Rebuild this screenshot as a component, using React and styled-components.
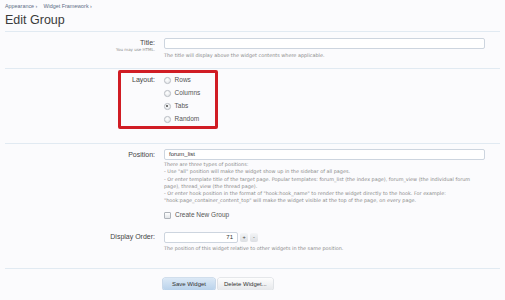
import React from "react";
import styled, { createGlobalStyle } from "styled-components";

const GlobalStyle = createGlobalStyle`
  html, body {
    margin: 0;
    padding: 0;
    background: #fbfbfd;
  }
  body {
    font-family: "Liberation Sans", Arial, sans-serif;
    color: #333;
  }
`;

const Page = styled.div`
  width: 495px;
  padding: 3px 5px 0;
`;

const Crumbs = styled.div`
  display: flex;
  gap: 6px;
  height: 7px;
  font-size: 5.4px;
  line-height: 7px;
  color: #5d6d86;
`;

const Heading = styled.h1`
  margin: 0;
  height: 21px;
  font-weight: normal;
  font-size: 12.5px;
  line-height: 21px;
  color: #3a3a3a;
`;

const Rule = styled.div`
  height: 1px;
  background: #e1eaf2;
`;

const Row = styled.div`
  position: relative;
  display: grid;
  grid-template-columns: 150px 321px;
  column-gap: 9px;
  padding: ${(p) => p.$pad || "6px 0 0"};
  height: ${(p) => p.$h}px;
  box-sizing: border-box;
`;

const Label = styled.div`
  text-align: right;
  font-size: 7px;
  line-height: ${(p) => p.$lh || 11}px;
  color: #444;
`;

const SubLabel = styled.div`
  text-align: right;
  font-family: "DejaVu Sans", Verdana, sans-serif;
  font-size: 4px;
  line-height: 5px;
  color: #8a8a8a;
`;

const Control = styled.div`
  display: flex;
  flex-direction: column;
`;

const Input = styled.div`
  height: 11px;
  width: ${(p) => p.$w || 321}px;
  box-sizing: border-box;
  background: #fff;
  border: 1px solid #cdd5df;
  border-radius: 2px;
  font-size: 6px;
  line-height: 9px;
  padding: 0 4px;
  color: #333;
  text-align: ${(p) => p.$align || "left"};
`;

const Hint = styled.div`
  margin-top: ${(p) => p.$mt ?? 3}px;
  font-family: "DejaVu Sans", Verdana, sans-serif;
  font-size: 4.9px;
  line-height: 7.3px;
  color: #8a8a8a;
  white-space: nowrap;
`;

const Options = styled.div`
  display: flex;
  flex-direction: column;
  gap: 6.5px;
`;

const Option = styled.label`
  display: flex;
  align-items: center;
  gap: 4px;
  height: 6.5px;
  font-size: 6.5px;
  line-height: 6.5px;
  color: #555;
`;

const Radio = styled.span`
  flex: none;
  width: 4.6px;
  height: 4.6px;
  border-radius: 50%;
  border: 0.6px solid #b8bcc2;
  background: radial-gradient(circle at 40% 35%, #fff, #dfe2e6);
  display: flex;
  align-items: center;
  justify-content: center;
  &::after {
    content: "";
    width: 2px;
    height: 2px;
    border-radius: 50%;
    background: ${(p) => (p.$on ? "#444" : "transparent")};
  }
`;

const Check = styled.span`
  flex: none;
  width: 5px;
  height: 5px;
  border-radius: 1px;
  border: 0.6px solid #aeb3ba;
  background: linear-gradient(#fff, #e2e5e9);
`;

const Highlight = styled.div`
  position: absolute;
  left: 113px;
  top: 1px;
  width: 100px;
  height: 59px;
  box-sizing: border-box;
  border: 3px solid #d01c24;
  border-radius: 2px;
  pointer-events: none;
`;

const Spinner = styled.div`
  display: flex;
  align-items: center;
  gap: 2px;
`;

const Step = styled.span`
  width: 8px;
  height: 9px;
  border-radius: 2px;
  background: linear-gradient(#f4f5f7, #dcdfe3);
  font-size: 5.5px;
  line-height: 9px;
  text-align: center;
  color: #444;
`;

const Buttons = styled.div`
  display: flex;
  gap: 3px;
  padding: 9px 0 0 158px;
`;

const Button = styled.span`
  height: 12px;
  padding: 0 ${(p) => (p.$primary ? 9 : 6)}px;
  border-radius: 2px;
  font-size: 6px;
  line-height: 12px;
  color: #333;
  background: ${(p) =>
    p.$primary
      ? "linear-gradient(#dce9f6, #b9d2eb)"
      : "linear-gradient(#fdfdfd, #e6e8eb)"};
  box-shadow: 0 0 0 0.6px ${(p) => (p.$primary ? "#a8c2dc" : "#cfd3d8")};
`;

const layouts = ["Rows", "Columns", "Tabs", "Random"];

const positionHelp = [
  "There are three types of positions:",
  '- Use "all" position will make the widget show up in the sidebar of all pages.',
  "- Or enter template title of the target page. Popular templates: forum_list (the index page), forum_view (the individual forum",
  "page), thread_view (the thread page).",
  '- Or enter hook position in the format of "hook:hook_name" to render the widget directly to the hook. For example:',
  '"hook:page_container_content_top" will make the widget visible at the top of the page, on every page.',
];

export default function App() {
  return (
    <>
      <GlobalStyle />
      <Page>
        <Crumbs>
          <span>Appearance ›</span>
          <span>Widget Framework ›</span>
        </Crumbs>
        <Heading>Edit Group</Heading>
        <Rule />

        <Row $h={36}>
          <div>
            <Label $lh={9}>Title:</Label>
            <SubLabel>You may use HTML.</SubLabel>
          </div>
          <Control>
            <Input />
            <Hint>The title will display above the widget contents where applicable.</Hint>
          </Control>
        </Row>
        <Rule />

        <Row $h={74} $pad="8px 0 0">
          <Label $lh={6.5}>Layout:</Label>
          <Options>
            {layouts.map((l) => (
              <Option key={l}>
                <Radio $on={l === "Tabs"} />
                {l}
              </Option>
            ))}
          </Options>
          <Highlight />
        </Row>
        <Rule />

        <Row $h={84} $pad="5px 0 0">
          <Label>Position:</Label>
          <Control>
            <Input>forum_list</Input>
            <Hint $mt={1}>
              {positionHelp.map((t) => (
                <div key={t}>{t}</div>
              ))}
            </Hint>
            <Option style={{ marginTop: 7 }}>
              <Check />
              Create New Group
            </Option>
          </Control>
        </Row>

        <Row $h={40} $pad="4px 0 0">
          <Label $lh={10}>Display Order:</Label>
          <Control>
            <Spinner>
              <Input $w={74} $align="right">71</Input>
              <Step>+</Step>
              <Step>-</Step>
            </Spinner>
            <Hint $mt={2}>The position of this widget relative to other widgets in the same position.</Hint>
          </Control>
        </Row>
        <Rule />

        <Buttons>
          <Button $primary>Save Widget</Button>
          <Button>Delete Widget...</Button>
        </Buttons>
      </Page>
    </>
  );
}
